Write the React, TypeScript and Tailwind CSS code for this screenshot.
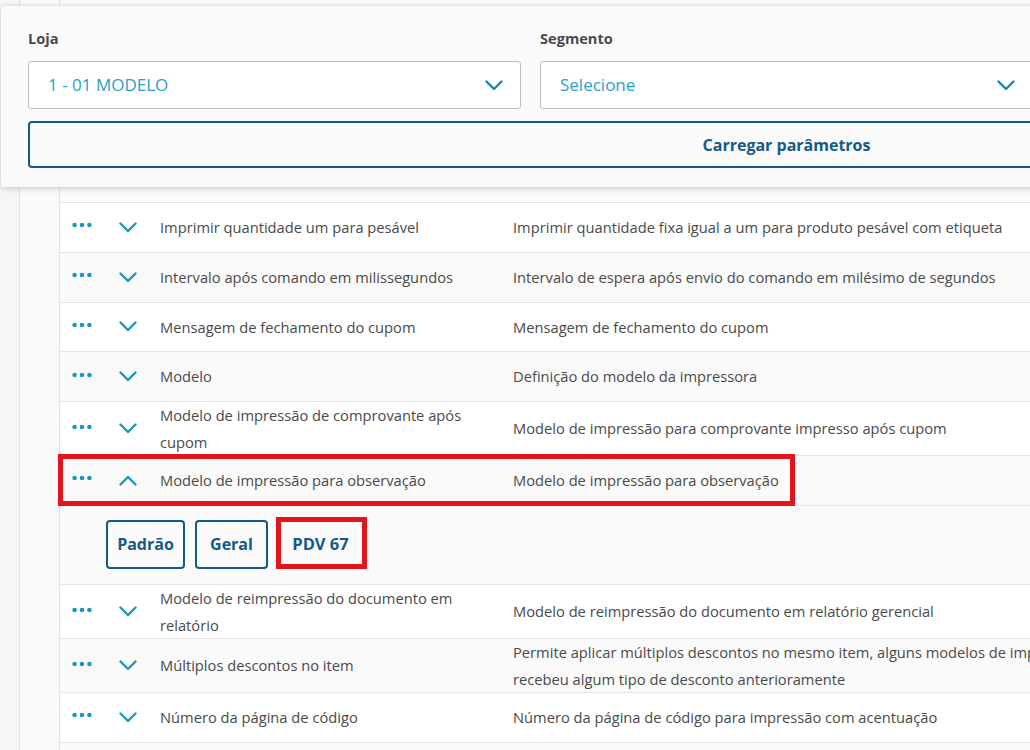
import React from "react";

type Row = {
  title: string[];
  desc: string[];
  open?: boolean;
};

const rows: Row[] = [
  { title: ["Imprimir quantidade um para pesável"], desc: ["Imprimir quantidade fixa igual a um para produto pesável com etiqueta"] },
  { title: ["Intervalo após comando em milissegundos"], desc: ["Intervalo de espera após envio do comando em milésimo de segundos"] },
  { title: ["Mensagem de fechamento do cupom"], desc: ["Mensagem de fechamento do cupom"] },
  { title: ["Modelo"], desc: ["Definição do modelo da impressora"] },
  { title: ["Modelo de impressão de comprovante após", "cupom"], desc: ["Modelo de impressão para comprovante impresso após cupom"] },
  { title: ["Modelo de impressão para observação"], desc: ["Modelo de impressão para observação"], open: true },
  { title: ["Modelo de reimpressão do documento em", "relatório"], desc: ["Modelo de reimpressão do documento em relatório gerencial"] },
  {
    title: ["Múltiplos descontos no item"],
    desc: [
      "Permite aplicar múltiplos descontos no mesmo item, alguns modelos de impressora não permitem se o item já",
      "recebeu algum tipo de desconto anterioramente",
    ],
  },
  { title: ["Número da página de código"], desc: ["Número da página de código para impressão com acentuação"] },
  { title: ["Número de vias do comprovante"], desc: ["Quantidade de vias impressas do comprovante"] },
];

function Dots() {
  return (
    <svg width="20" height="6" viewBox="0 0 20 6" fill="#1997bd">
      <circle cx="2.6" cy="3" r="2.3" />
      <circle cx="10" cy="3" r="2.3" />
      <circle cx="17.4" cy="3" r="2.3" />
    </svg>
  );
}

function Chevron({ up = false, className = "" }: { up?: boolean; className?: string }) {
  return (
    <svg width="18" height="11" viewBox="0 0 18 11" fill="none" className={className}>
      <path
        d={up ? "M1.5 9.5 L9 2 L16.5 9.5" : "M1.5 1.5 L9 9 L16.5 1.5"}
        stroke="currentColor"
        strokeWidth="2.4"
        strokeLinecap="round"
        strokeLinejoin="round"
      />
    </svg>
  );
}

function Select({ label, value }: { label: string; value: string }) {
  return (
    <div className="flex flex-col">
      <div className="h-[20px] text-[14.6px] leading-[20px] font-bold text-[#4a4a4a]">{label}</div>
      <div className="mt-[13px] h-[48px] flex items-center justify-between rounded-[3px] border border-[#bdbdbd] bg-white pl-[19px] pr-[17px]">
        <span className="text-[17px] text-[#29a1c6]">{value}</span>
        <Chevron className="text-[#1688ad]" />
      </div>
    </div>
  );
}

function ParamRow({ row, striped }: { row: Row; striped: boolean }) {
  return (
    <div
      className={`relative flex min-h-[49.75px] items-center border-b border-[#e6e6e6] text-[14.7px] leading-[26.5px] text-[#4a4a4a] ${
        striped ? "bg-[#fafafa]" : "bg-white"
      }`}
    >
      <div className="flex w-[45px] shrink-0 justify-center pr-[1px] -translate-y-[2px]">
        <Dots />
      </div>
      <div className="flex w-[45px] shrink-0 justify-center text-[#1997bd]">
        <Chevron up={row.open} />
      </div>
      <div className="w-[353px] shrink-0 px-[10px]">
        {row.title.map((t) => (
          <div key={t}>{t}</div>
        ))}
      </div>
      <div className="shrink-0 px-[10px] whitespace-nowrap">
        {row.desc.map((t) => (
          <div key={t}>{t}</div>
        ))}
      </div>
      {row.open && (
        <div className="pointer-events-none absolute left-[-2px] top-[-2px] h-[52px] w-[737px] border-[5px] border-[#e1161d]" />
      )}
    </div>
  );
}

export default function App() {
  return (
    <div className="relative h-[750px] w-[1030px] overflow-hidden bg-[#f5f5f5] font-['Open_Sans','Liberation_Sans',sans-serif]">
      {/* page body: side rails and the parameter table */}
      <div className="flex h-full">
        <div className="w-[20px] shrink-0 border-r border-[#e3e3e3] bg-[#f6f6f6]" />
        <div className="w-[40px] shrink-0 border-r border-[#e3e3e3] bg-[#fafafa]" />
        <div className="w-[1600px] shrink-0 bg-white">
          <div className="h-[203px] border-b border-[#e6e6e6] bg-[#fafafa]" />
          {rows.map((row, i) => (
            <React.Fragment key={row.title[0]}>
              <ParamRow row={row} striped={i % 2 === 1} />
              {row.open && (
                <div className="flex h-[79.25px] gap-[10px] border-b border-[#e6e6e6] bg-[#fafafa] pl-[46px] pt-[14px]">
                  <button className="h-[49px] w-[79px] rounded-[4px] border-2 border-[#145a86] text-[16px] font-bold text-[#145a86]">
                    Padrão
                  </button>
                  <button className="h-[49px] w-[73px] rounded-[4px] border-2 border-[#145a86] text-[16px] font-bold text-[#145a86]">
                    Geral
                  </button>
                  <div className="relative">
                    <button className="h-[49px] w-[85px] rounded-[4px] border-2 border-transparent text-[16.5px] font-bold text-[#145a86]">
                      PDV 67
                    </button>
                    <div className="pointer-events-none absolute left-[-2px] top-[-3px] h-[52px] w-[91px] border-[5px] border-[#e1161d]" />
                  </div>
                </div>
              )}
            </React.Fragment>
          ))}
        </div>
      </div>

      <div className="absolute left-[1px] top-[6px] h-[181px] w-[1572px] rounded-tl-[4px] bg-[#fafafa] px-[27px] pt-[22px] shadow-[0_1px_6px_rgba(0,0,0,0.22)]">
        <div className="grid grid-cols-[493px_493px_493px] gap-x-[19px]">
          <Select label="Loja" value="1 - 01 MODELO" />
          <Select label="Segmento" value="Selecione" />
          <Select label="Grupo" value="Selecione" />
        </div>
        <button className="mt-[12px] h-[47px] w-[1517px] rounded-[4px] border-2 border-[#145a86] text-[16px] font-bold text-[#145a86]">
          Carregar parâmetros
        </button>
      </div>
    </div>
  );
}
